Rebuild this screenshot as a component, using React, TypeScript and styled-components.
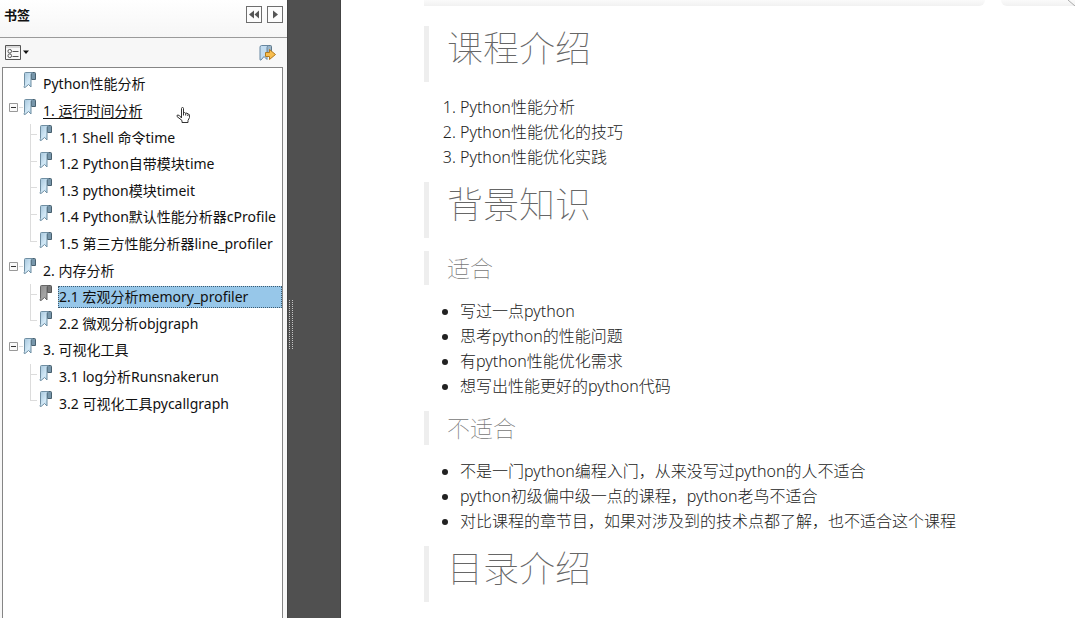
import React from 'react';
import styled, { createGlobalStyle } from 'styled-components';

const GlobalStyle = createGlobalStyle`
  * { box-sizing: border-box; }
  body {
    margin: 0;
    background: #fff;
    color: #111;
    font-family: "Noto Sans", "Noto Sans CJK SC", sans-serif;
    font-size: 14px;
  }
`;

const Viewer = styled.div`
  display: flex;
  height: 100vh;
  overflow: hidden;
`;

const Sidebar = styled.aside`
  display: flex;
  flex-direction: column;
  flex: 0 0 287px;
  position: relative;
  background: #f7f7f7;
`;

const PanelHeader = styled.header`
  display: flex;
  align-items: flex-start;
  justify-content: space-between;
  height: 38px;
  padding: 6px 4px 0;
  border-bottom: 1px solid #9a9a9a;
  background: linear-gradient(#fff, #f6f6f6);
`;

const PanelTitle = styled.h2`
  margin: 0;
  font-size: 13px;
  line-height: 18px;
  font-weight: 700;
`;

const HeaderButtons = styled.div`
  display: flex;
  gap: 5px;
`;

const SquareButton = styled.button`
  display: flex;
  width: 16px;
  height: 17px;
  padding: 0;
  border: 1px solid #6e6e6e;
  background: #fcfcfc;
`;

const Toolbar = styled.div`
  display: flex;
  align-items: center;
  justify-content: space-between;
  height: 29px;
  padding: 0 11px 0 5px;
`;

const ToolButton = styled.button`
  display: flex;
  padding: 0;
  border: 0;
  background: none;
`;

const TreeBox = styled.nav`
  flex: 1;
  margin: 0 4px 0 2px;
  padding-top: 3px;
  border: 1px solid #858585;
  border-bottom: 0;
  background: #fff;
  overflow: hidden;
`;

const Tree = styled.ul`
  display: flex;
  flex-direction: column;
  height: 346px;
  margin: 0;
  padding: 0;
  list-style: none;
`;

const TreeRow = styled.li<{ $child: boolean }>`
  display: flex;
  flex: 1;
  align-items: stretch;
  padding-left: ${(p) => (p.$child ? 27 : 6)}px;
`;

const ToggleCell = styled.div`
  display: flex;
  align-items: flex-start;
  flex: 0 0 14px;
  padding-top: 5px;
`;

const Toggle = styled.button`
  display: flex;
  padding: 0;
  border: 0;
  background: none;
`;

const Guide = styled.div`
  display: flex;
  flex-direction: column;
  flex: 0 0 9px;
`;

const Elbow = styled.span`
  height: 11px;
  margin-right: 2px;
  border-left: 1px solid #dcdcdc;
  border-bottom: 1px solid #dcdcdc;
`;

const Trunk = styled.span`
  flex: 1;
  border-left: 1px solid #dcdcdc;
`;

const IconCell = styled.span`
  flex: 0 0 19px;
`;

const Label = styled.a<{ $selected?: boolean; $hovered?: boolean }>`
  align-self: center;
  flex: 1;
  height: 22px;
  border: 1px dotted ${(p) => (p.$selected ? '#3c5a70' : 'transparent')};
  background: ${(p) => (p.$selected ? '#97c7e9' : 'transparent')};
  color: #111;
  line-height: 20px;
  white-space: nowrap;
  text-decoration: ${(p) => (p.$hovered ? 'underline' : 'none')};
  text-underline-offset: 2px;
`;

const Pointer = styled.svg`
  position: absolute;
  left: 175px;
  top: 106px;
`;

const Splitter = styled.div`
  display: flex;
  align-items: center;
  flex: 0 0 54px;
  padding: 32px 0 0 1px;
  border-left: 1px solid #444;
  border-right: 1px solid #444;
  background: #505050;
`;

const Page = styled.main`
  flex: 1;
  min-width: 0;
  overflow: hidden;
  background: #fff;
`;

const PageTop = styled.div`
  display: flex;
  gap: 16px;
  height: 6px;
  margin: 0 0 20px 83px;
`;

const TopStrip = styled.div`
  flex: 1;
  border-radius: 0 0 6px 0;
  background: linear-gradient(#fafafa, #f1f1f1);
`;

const TopCorner = styled.div`
  display: flex;
  justify-content: flex-end;
  flex: 0 0 74px;
  border-radius: 0 0 0 6px;
  background: linear-gradient(#fafafa, #f1f1f1);
`;

const Article = styled.article`
  margin-left: 83px;
  color: #222;
  font-size: 16px;
  font-weight: 300;
  line-height: 25px;
`;

const Title = styled.h1`
  margin: 0 0 13px;
  padding-left: 18px;
  border-left: 5px solid #eee;
  color: #666;
  font-size: 36px;
  font-weight: 100;
  line-height: 45px;
  height: 56px;
`;

const Subtitle = styled.h2`
  margin: 0 0 14px;
  padding-left: 18px;
  border-left: 5px solid #eee;
  color: #777;
  font-size: 23px;
  font-weight: 100;
  line-height: 34px;
`;

const Numbered = styled.ol`
  margin: 0 0 12px;
  padding-left: 36px;
`;

const Bulleted = styled.ul`
  margin: 0 0 12px;
  padding-left: 36px;
`;

const BookmarkIcon = ({ active = false }: { active?: boolean }) => (
  <svg width="13" height="18" viewBox="0 0 13 18" aria-hidden="true" display="block">
    <defs>
      <linearGradient id={active ? 'ribbonGray' : 'ribbonBlue'} x1="0" x2="1" y1="0" y2="1">
        <stop offset="0" stopColor={active ? '#8b8b8b' : '#a3c4da'} />
        <stop offset="0.6" stopColor={active ? '#a6a6a6' : '#d3e9f7'} />
        <stop offset="1" stopColor={active ? '#888' : '#9fc6de'} />
      </linearGradient>
    </defs>
    <path d="M8.500 1.500h3q1 0 1 1v6h-4z" fill={active ? '#777' : '#7796aa'} stroke={active ? '#555' : '#48606f'} />
    <path
      d="M2.500 1.500h7q-1.500.5-1.500 2v12.500l-2.500-2.500-3.500 3q-1 .3-1-.5l.5-1.500v-12q0-1 1-1z"
      fill={`url(#${active ? 'ribbonGray' : 'ribbonBlue'})`}
      stroke={active ? '#666' : '#6f8ea2'}
    />
  </svg>
);

const rows = [
  { text: 'Python性能分析' },
  { text: '1. 运行时间分析', open: true, hovered: true },
  { text: '1.1 Shell 命令time', child: true },
  { text: '1.2 Python自带模块time', child: true },
  { text: '1.3 python模块timeit', child: true },
  { text: '1.4 Python默认性能分析器cProfile', child: true },
  { text: '1.5 第三方性能分析器line_profiler', child: true, last: true },
  { text: '2. 内存分析', open: true },
  { text: '2.1 宏观分析memory_profiler', child: true, selected: true },
  { text: '2.2 微观分析objgraph', child: true, last: true },
  { text: '3. 可视化工具', open: true },
  { text: '3.1 log分析Runsnakerun', child: true },
  { text: '3.2 可视化工具pycallgraph', child: true, last: true },
];

export default function App() {
  return (
    <Viewer>
      <GlobalStyle />
      <Sidebar>
        <PanelHeader>
          <PanelTitle>书签</PanelTitle>
          <HeaderButtons>
            <SquareButton aria-label="折叠面板">
              <svg width="14" height="15" viewBox="0 0 14 15" fill="#555">
                <path d="M7 3.500v8L2 7.500zM12 3.500v8L7.500 7.500z" />
              </svg>
            </SquareButton>
            <SquareButton aria-label="展开面板">
              <svg width="14" height="15" viewBox="0 0 14 15" fill="#555">
                <path d="M5 3.500v8l5-4z" />
              </svg>
            </SquareButton>
          </HeaderButtons>
        </PanelHeader>
        <Toolbar>
          <ToolButton aria-label="选项">
            <svg width="24" height="15" viewBox="0 0 24 15" fill="none" stroke="#555">
              <path d="M.5.5h15v14H.5z" fill="#f8f8f8" />
              <path d="M1 2h14" stroke="#bbb" />
              <rect x="3" y="4.500" width="3.500" height="3.500" rx="1.500" />
              <rect x="3" y="9" width="3.500" height="3.500" rx="1.500" />
              <path d="M7.500 6.500h6M7.500 11.500h6" />
              <path d="M18 5.500h6l-3 3.500z" fill="#111" stroke="none" />
            </svg>
          </ToolButton>
          <ToolButton aria-label="展开当前书签">
            <svg width="17" height="18" viewBox="0 0 17 18">
              <path d="M7 1.500h4.500q1 0 1 1v6H8z" fill="#9bb5c8" stroke="#60798b" />
              <path d="M2.500 1.500h7q-1.500.5-1.500 2v12l-3-3-3 3.500q-1.200.5-1-.8v-12q0-1.500 1.500-1.700z" fill="#c2dcf0" stroke="#6686a0" />
              <path d="M6.500 8.500h4v-3l6 5-6 5v-3h-4z" fill="#f8bd4d" stroke="#b17a20" />
            </svg>
          </ToolButton>
        </Toolbar>
        <TreeBox aria-label="书签">
          <Tree>
            {rows.map((row) => (
              <TreeRow key={row.text} $child={!!row.child}>
                {row.child ? (
                  <Guide>
                    <Elbow />
                    {!row.last && <Trunk />}
                  </Guide>
                ) : (
                  <ToggleCell>
                    {row.open && (
                      <Toggle aria-label="折叠" aria-expanded="true">
                        <svg width="14" height="9" viewBox="0 0 14 9" fill="none">
                          <path d="M.5.5h8v8h-8z" fill="#fafafa" stroke="#999" />
                          <path d="M2 4.500h5" stroke="#333" />
                          <path d="M10 4.500h4" stroke="#dcdcdc" />
                        </svg>
                      </Toggle>
                    )}
                  </ToggleCell>
                )}
                <IconCell>
                  <BookmarkIcon active={row.selected} />
                </IconCell>
                <Label href="#" $selected={row.selected} $hovered={row.hovered}>
                  {row.text}
                </Label>
              </TreeRow>
            ))}
          </Tree>
        </TreeBox>
        <Pointer width="16" height="18" viewBox="0 0 16 18" aria-hidden="true">
          <path
            d="M6.500 10V2.500q0-1 1-1t1 1V7l1-.5 1.200.8 1.300-.3 1 1 1.300.5.2 3-1.500 3v2H7v-2L2 10.500q-.5-1.500 1-1.500 1.500 0 3.500 3z"
            fill="#fff"
            stroke="#333"
          />
          <path d="M8.500 7v2.500M10.700 7.500v2M12.800 8.500v1.500" stroke="#333" />
        </Pointer>
      </Sidebar>
      <Splitter role="separator" aria-orientation="vertical">
        <svg width="4" height="50" viewBox="0 0 4 50" aria-hidden="true">
          <path d="M.5 0v50M3.500 0v50" stroke="#c4c4c4" strokeDasharray="1 1" />
        </svg>
      </Splitter>
      <Page>
        <PageTop>
          <TopStrip />
          <TopCorner>
            <svg width="8" height="6" viewBox="0 0 8 6" aria-hidden="true">
              <path d="M1 0l7 6" stroke="#aaa" />
            </svg>
          </TopCorner>
        </PageTop>
        <Article>
          <Title>课程介绍</Title>
          <Numbered>
            <li>Python性能分析</li>
            <li>Python性能优化的技巧</li>
            <li>Python性能优化实践</li>
          </Numbered>
          <Title>背景知识</Title>
          <Subtitle>适合</Subtitle>
          <Bulleted>
            <li>写过一点python</li>
            <li>思考python的性能问题</li>
            <li>有python性能优化需求</li>
            <li>想写出性能更好的python代码</li>
          </Bulleted>
          <Subtitle>不适合</Subtitle>
          <Bulleted>
            <li>不是一门python编程入门，从来没写过python的人不适合</li>
            <li>python初级偏中级一点的课程，python老鸟不适合</li>
            <li>对比课程的章节目，如果对涉及到的技术点都了解，也不适合这个课程</li>
          </Bulleted>
          <Title>目录介绍</Title>
        </Article>
      </Page>
    </Viewer>
  );
}
